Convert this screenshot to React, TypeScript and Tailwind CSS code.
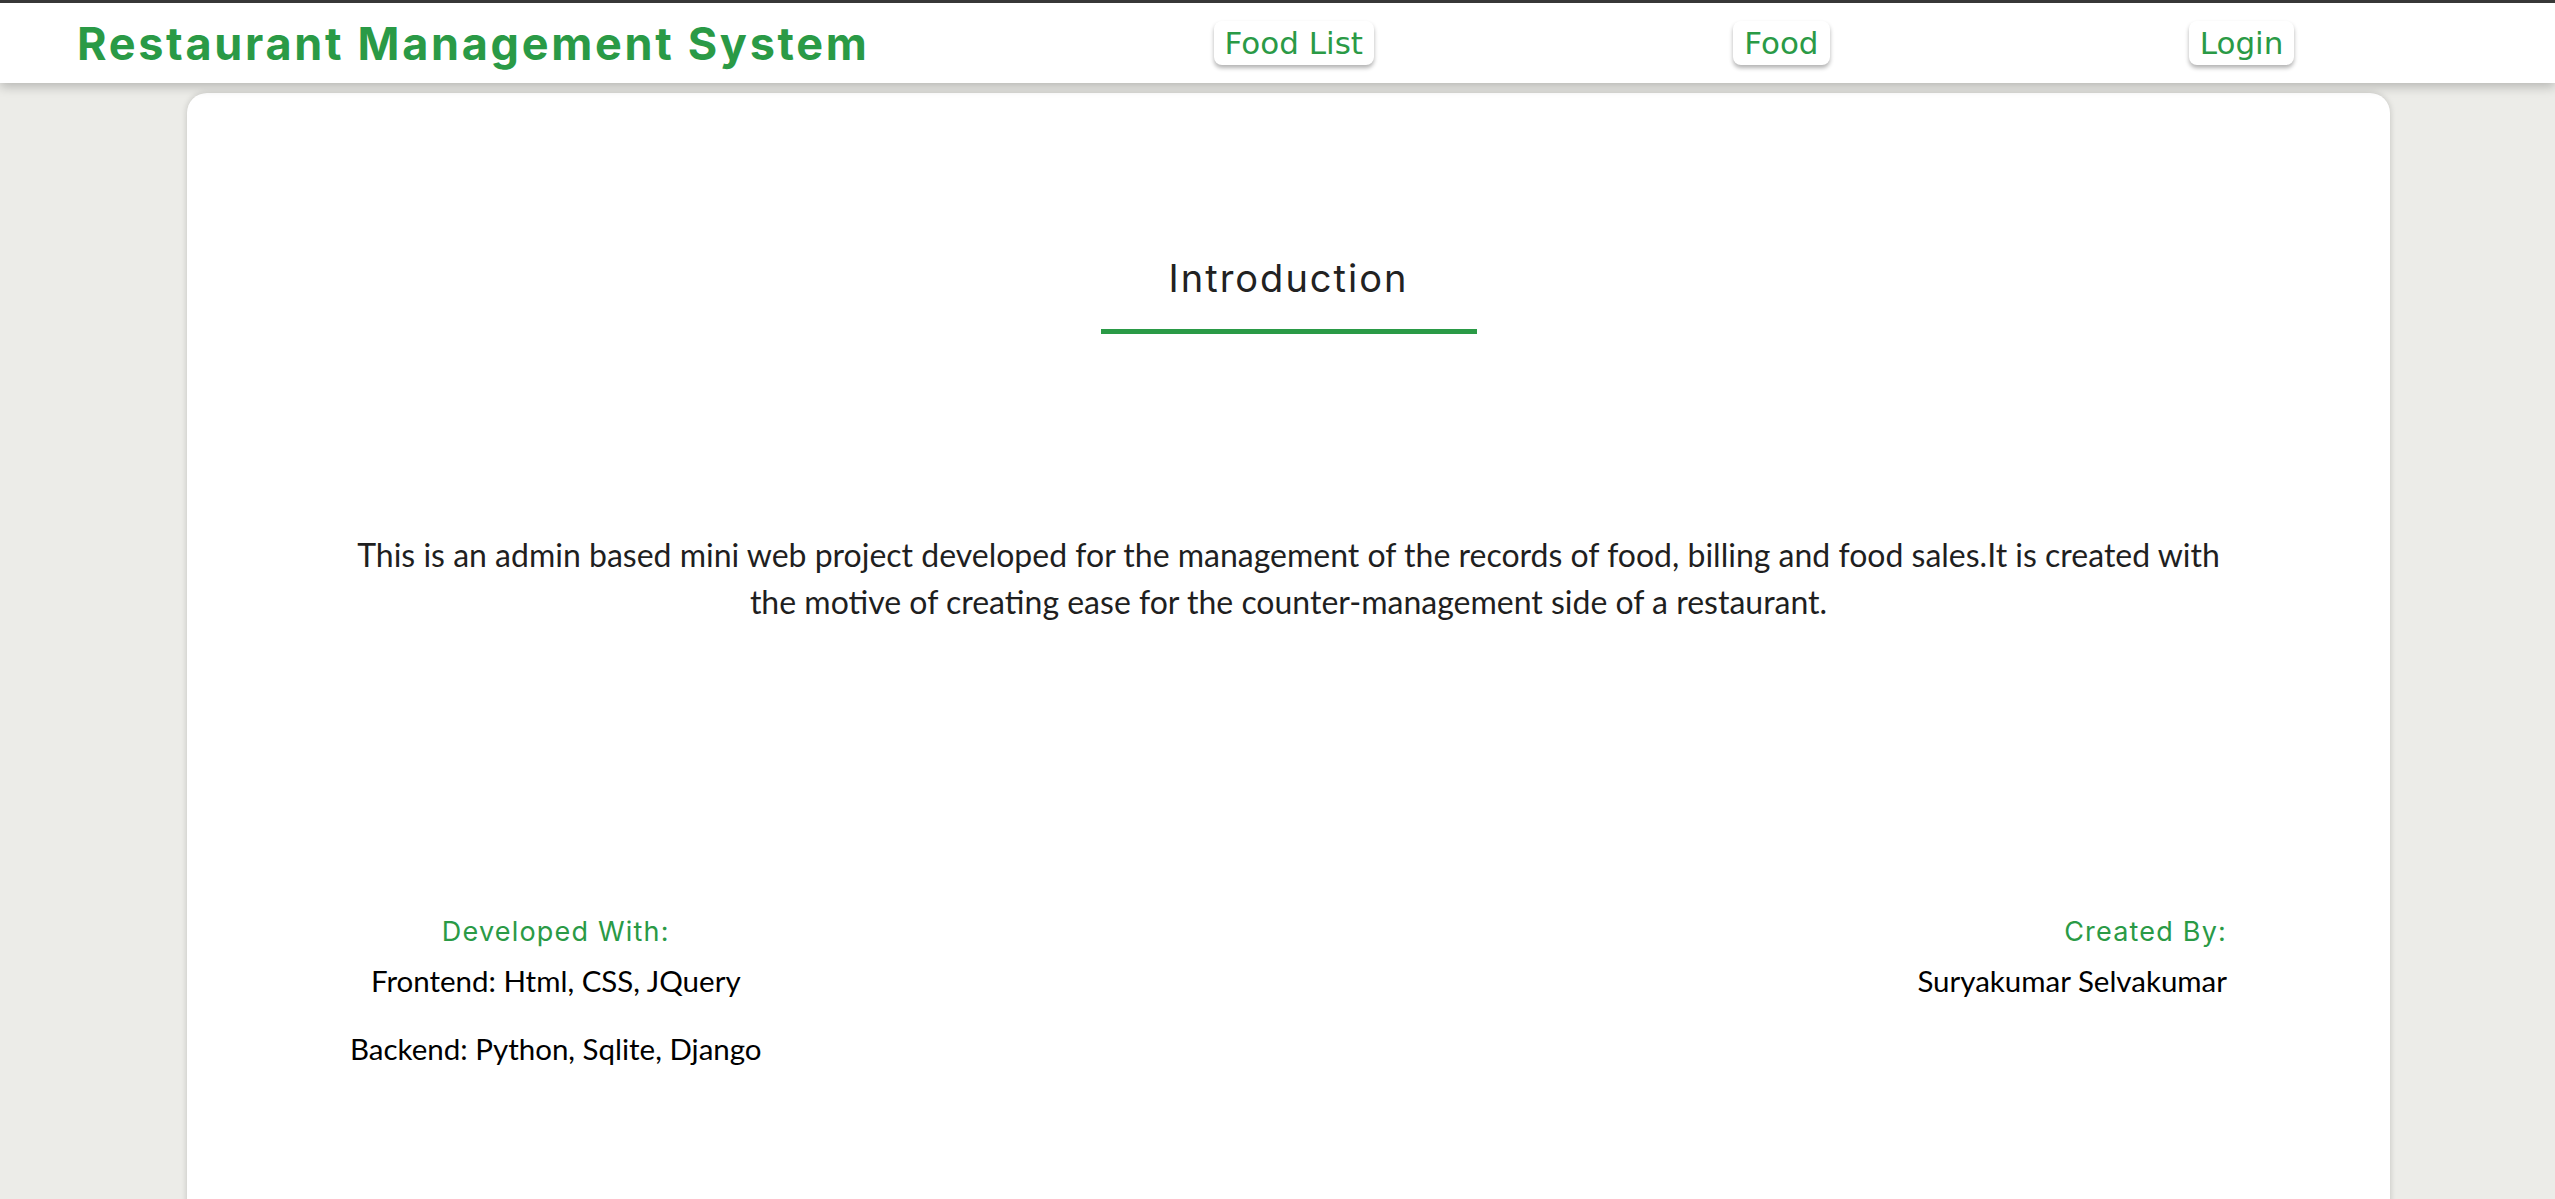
export default function App() {
  const heading = { fontFamily: 'Inter, "DejaVu Sans", sans-serif' }
  const body = { fontFamily: 'Lato, "Liberation Sans", sans-serif' }
  const nav = { fontFamily: '"DejaVu Sans", Verdana, sans-serif' }

  return (
    <div className="min-h-screen bg-[#ecece8] overflow-hidden">
      {/* header */}
      <header className="relative z-10 border-t-[3px] border-[#383838] bg-white shadow-[0_4px_10px_rgba(0,0,0,0.22)]">
        <div className="h-[80px] flex items-center">
          <h1
            className="ml-[77px] text-[45px] font-bold tracking-[2.7px] text-[#2a9a46] leading-none whitespace-nowrap"
            style={heading}
          >
            Restaurant Management System
          </h1>
          <nav className="ml-auto mr-[81px] w-[1440px] flex justify-around items-center">
            {['Food List', 'Food', 'Login'].map((item) => (
              <a
                key={item}
                href="#"
                className="h-[44px] px-[11px] flex items-center rounded-[8px] bg-white text-[#2a9a46] text-[31px] shadow-[0_3px_4px_rgba(0,0,0,0.3)]"
                style={nav}
              >
                {item}
              </a>
            ))}
          </nav>
        </div>
      </header>

      {/* main card */}
      <main className="ml-[187px] mt-[10px] w-[2203px] min-h-[1200px] bg-white rounded-[20px] shadow-[0_0_6px_rgba(0,0,0,0.18)] pt-[161px]">
        <div className="flex flex-col items-center">
          <h2 className="text-[38px] tracking-[2px] leading-[48px] text-[#222]" style={heading}>
            Introduction
          </h2>
          <div className="mt-[27px] w-[376px] h-[5px] bg-[#2a9a46]" />
        </div>

        <p
          className="mx-auto mt-[197px] w-[1880px] text-center text-[32px] leading-[47px] text-[#1f1f1f]"
          style={body}
        >
          This is an admin based mini web project developed for the management of the records of food, billing and food sales.It is created with the motive of creating ease for the counter-management side of a restaurant.
        </p>

        <div className="mt-[291px] px-[163px] flex justify-between items-start">
          <div className="text-center">
            <div className="text-[27px] tracking-[1.2px] leading-[32px] text-[#2a9a46]" style={heading}>
              Developed With:
            </div>
            <p className="mt-[16px] text-[29.5px] leading-[34px] text-black" style={body}>
              Frontend: Html, CSS, JQuery
            </p>
            <p className="mt-[34px] text-[29.5px] leading-[34px] text-black" style={body}>
              Backend: Python, Sqlite, Django
            </p>
          </div>
          <div className="text-right">
            <div className="text-[27px] tracking-[1.2px] leading-[32px] text-[#2a9a46]" style={heading}>
              Created By:
            </div>
            <p className="mt-[16px] text-[29.5px] leading-[34px] text-black" style={body}>
              Suryakumar Selvakumar
            </p>
          </div>
        </div>
      </main>
    </div>
  )
}
